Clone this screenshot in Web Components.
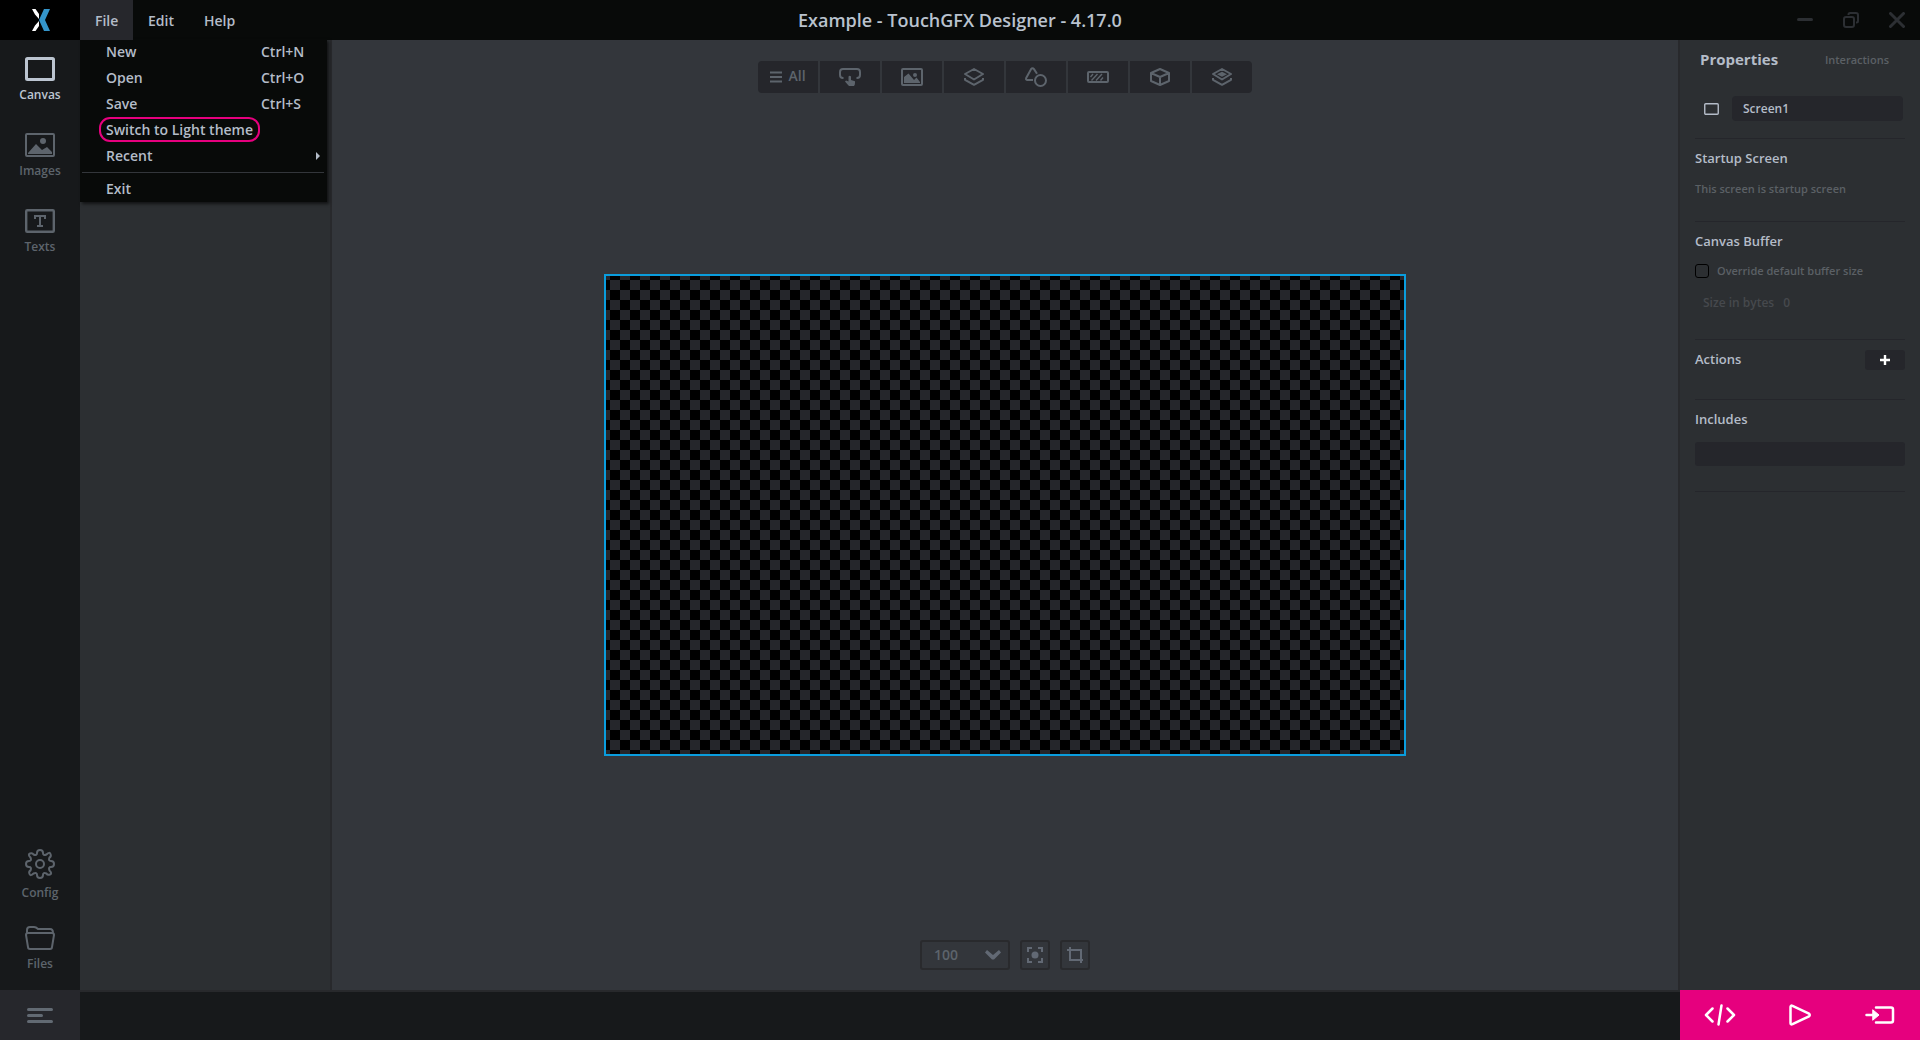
<!DOCTYPE html>
<html lang="en"><head><meta charset="utf-8"><title>Example - TouchGFX Designer - 4.17.0</title>
<style>html,body{margin:0;height:100%;overflow:hidden;background:#33363b}body{font-family:"Open Sans","Noto Sans",sans-serif}</style></head><body>
<gfx-app></gfx-app>
<script>
const base='<style>*{box-sizing:border-box}svg{display:block;flex:none}</style>';
function define(name,html){
  const t=document.createElement('template');t.innerHTML=base+html;
  customElements.define(name,class extends HTMLElement{
    constructor(){super();this.attachShadow({mode:'open'}).append(t.content.cloneNode(true));}
  });
}
define('menu-row',`<style>:host{display:flex;height:26px;align-items:center;padding:0 0 0 26px;font:600 14px/26px "Open Sans",sans-serif;color:#b4bcc8}
.l{width:155px;white-space:nowrap}.l span{display:inline-block}
:host([marked]) .l span{outline:2px solid #e6007e;border-radius:9px;line-height:21px;padding:0 5px;margin:0 -5px}
.k{white-space:nowrap}</style><div class="l"><span><slot></slot></span></div><div class="k"><slot name="key"></slot></div>`);
define('file-menu',`<style>:host{display:block;width:247px;height:163px;background:#080a09;box-shadow:2px 2px 3px #0009}
hr{border:0;height:1px;background:#33363b;margin:3px 3px 3px 2px}svg{margin-left:55px}</style>
<menu-row>New<span slot="key">Ctrl+N</span></menu-row><menu-row>Open<span slot="key">Ctrl+O</span></menu-row><menu-row>Save<span slot="key">Ctrl+S</span></menu-row>
<menu-row marked>Switch to Light theme</menu-row><menu-row>Recent<svg slot="key" width="4" height="8"><path d="M0 0 4 4 0 8z" fill="#b4bcc8"/></svg></menu-row><hr><menu-row>Exit</menu-row>`);
define('title-bar',`<style>:host{display:flex;height:40px;background:#080a09;color:#b4bcc8;font:600 14px/41px "Open Sans",sans-serif;position:relative;z-index:2}
.logo{width:80px;background:#000;padding:9px 0 0 32px}.m{height:40px}.file{width:53px;background:#26272c;position:relative;padding-left:15px}
.edit{width:56px;padding-left:15px}.help{width:63px;padding-left:15px}
.title{flex:1;padding-left:546px;font-size:18px;white-space:pre;color:#b9c2ce}
.win{display:flex;align-items:center;gap:30px;padding-right:15px}file-menu{position:absolute;left:0;top:39px;z-index:-1}</style>
<div class="logo"><svg width="18" height="22" viewBox="0 0 18 22"><path d="M0 0h3.500L7 5v5L3 5.500zM0 22h3.500L7 17v-5L3 16.500z" fill="#fff"/><path d="M12 0h6l-5 11 5 11h-6L7 11z" fill="#3495cb"/></svg></div>
<div class="m file">File<file-menu></file-menu></div><div class="m edit">Edit</div><div class="m help">Help</div><div class="title">Example - TouchGFX Designer - 4.17.0</div>
<div class="win"><svg width="16" height="16"><path d="M1.500 7.500h13" stroke="#2c2f33" stroke-width="3" stroke-linecap="round"/></svg>
<svg width="16" height="16" fill="none" stroke="#2c2f33" stroke-width="2"><rect x="1" y="5" width="10" height="10" rx="2"/><path d="M5.500 3V2.500Q5.500 1 7 1h6q2 0 2 2v6q0 1.500-1.500 1.500H13"/></svg>
<svg width="16" height="16"><path d="M1.500 1.500l13 13M14.500 1.500l-13 13" stroke="#2c2f33" stroke-width="3" stroke-linecap="round"/></svg></div>`);
define('nav-item',`<style>:host{display:flex;flex-direction:column;align-items:center;width:80px;color:#5d646c;font:600 12px/16px "Open Sans",sans-serif}
:host([active]){color:#bcc5d1}.t{margin-top:var(--gap,6px)}</style><slot name="icon"></slot><div class="t"><slot></slot></div>`);
define('side-nav',`<style>:host{display:flex;flex-direction:column;width:80px;background:#17191b;padding-top:17px}
nav-item{height:76px}.sp{flex:1}.menu{height:50px;background:#26272c;padding:18px 0 0 27px}.cfg{height:77px;--gap:6px}.files{height:64px}</style>
<nav-item active><svg slot="icon" width="30" height="24"><rect x="1.500" y="1.500" width="27" height="21" rx="1" fill="none" stroke="currentColor" stroke-width="3"/></svg>Canvas</nav-item>
<nav-item><svg slot="icon" width="30" height="24"><rect x="1" y="1" width="28" height="22" rx="1" fill="none" stroke="currentColor" stroke-width="2"/><circle cx="18" cy="8" r="3" fill="currentColor"/><path d="M3 20 11 11l6 6 5-3 5 5v2H3z" fill="currentColor"/></svg>Images</nav-item>
<nav-item><svg slot="icon" width="30" height="24" fill="none" stroke="currentColor"><rect x="1.200" y="1.200" width="27.600" height="21.600" rx="1" stroke-width="2.400"/><path d="M10 10V7h10v3M15 7v10M12 17h6" stroke-width="2"/></svg>Texts</nav-item>
<div class="sp"></div>
<nav-item class="cfg"><svg slot="icon" width="30" height="30" fill="none" stroke="currentColor" stroke-width="2"><circle cx="15" cy="15" r="4"/><path d="M12 4Q12 1 15 1t3 3q0 3 3.500 1.500Q24.500 2.500 25.500 5t-1 3.500Q23 12 26 12q3 0 3 3t-3 3q-3 0-1.500 3.500Q27.500 24.500 25 25.500t-3.500-1Q18 23 18 26q0 3-3 3t-3-3q0-3-3.500-1.500Q5.500 27.500 4.500 25t1-3.500Q7 18 4 18q-3 0-3-3t3-3q3 0 1.500-3.500Q2.500 5.500 5 4.500t3.500 1Q12 7 12 4z"/></svg>Config</nav-item>
<nav-item class="files"><svg slot="icon" width="30" height="24" fill="none" stroke="currentColor" stroke-width="2"><path d="M2 7V4q0-3 3-3h4q2 0 4 2h12q3 0 3 4M1 9q0-2 2-2h24q2 0 2 2l-2 12q0 2-2 2H5q-2 0-2-2z"/></svg>Files</nav-item>
<div class="menu"><svg width="26" height="15"><path d="M1.500 1.500h23M1.500 7.500h13M1.500 13.500h23" stroke="#626a73" stroke-width="3" stroke-linecap="round"/></svg></div>`);
define('tool-cell',`<style>:host{display:flex;align-items:center;justify-content:center;width:60px;height:32px;background:#25262b;color:#5d646c;font:600 14px/32px "Open Sans",sans-serif}</style><slot></slot>`);
define('tool-bar',`<style>:host{display:flex;gap:2px;width:494px;border-radius:4px;overflow:hidden}svg{fill:none;stroke:currentColor;stroke-width:2}.all svg{margin-right:6px}.all span{line-height:30px;height:32px}</style>
<tool-cell class="all"><svg width="12" height="12"><path d="M0 1.500h12M0 6h12M0 10.500h12"/></svg><span>All</span></tool-cell>
<tool-cell><svg width="22" height="18"><path d="M4.500 10H4q-3 0-3-3V4q0-3 3-3h14q3 0 3 3v3q0 3-3 3h-.5"/><path d="M9.500 8.500q1.250-1.500 2.500 0V12l4 1.200V15q0 2-1 3h-5q-1.500-1.500-4-4.500l1-1 2.500 1z" fill="currentColor" stroke="none"/></svg></tool-cell>
<tool-cell><svg width="22" height="18"><rect x="1" y="1" width="20" height="16" rx="1"/><circle cx="14" cy="7" r="2" fill="currentColor" stroke="none"/><path d="M3 15V9l4.500-3.500L13 12l2.500-2.500L19 14v1z" fill="currentColor" stroke="none"/></svg></tool-cell>
<tool-cell><svg width="20" height="18" stroke-linejoin="round"><path d="M1 6 10 1l9 5-9 5.500zM1 10v1.800l9 5 9-5V10"/></svg></tool-cell>
<tool-cell><svg width="22" height="20"><path d="M8 13H2.500q-2 0-1.300-2L6 2.200q1.500-2 3 0l3 4.500"/><circle cx="15.500" cy="13.500" r="5.500"/></svg></tool-cell>
<tool-cell><svg width="22" height="12"><rect x="1" y="1" width="20" height="10" rx="1"/><path d="M3.500 6l2.500-3M4.500 9.500l6-6.500M9 9.500l6-6.500M13.500 9.500l2.500-3" stroke-width="1.400"/></svg></tool-cell>
<tool-cell><svg width="20" height="18" stroke-linejoin="round"><path d="M1 5l9-4 9 4v8l-9 4-9-4zM1 5l9 4 9-4M10 9v8"/></svg></tool-cell>
<tool-cell><svg width="20" height="18" stroke-linejoin="round"><path d="M1 6 10 1l9 5-9 5.500zM1 10v1.800l9 5 9-5V10"/><path d="M5 6.200 10 3.800l5 2.400-5 2.600z" fill="currentColor" stroke="none"/></svg></tool-cell>`);
define('zoom-bar',`<style>:host{display:flex;gap:10px;color:#5d646c}div{height:30px;width:30px;border:2px solid #292a2d;border-radius:3px;display:flex;align-items:center;justify-content:center}
.n{width:90px;justify-content:space-between;padding:0 7px 0 12px;font:600 14px/28px "Open Sans",sans-serif}svg{fill:none;stroke:#626974;stroke-width:2}</style>
<div class="n"><span>100</span><svg width="16" height="10"><path d="M2 0 8 5l6-5 2 2.500L9 9.500H7L0 2.500z" fill="#626974" stroke="none"/></svg></div>
<div><svg width="16" height="16"><path d="M1 5V1h4M11 1h4v4M15 11v4h-4M5 15H1v-4"/><circle cx="8" cy="8" r="3.500" fill="#626974" stroke="none"/></svg></div>
<div><svg width="16" height="16"><path d="M0 3h14v13M3 0v13h13"/></svg></div>`);
define('design-canvas',`<style>:host{display:block;box-sizing:border-box;width:802px;height:482px;border:2px solid #0a9ddd;background:repeating-conic-gradient(#25262b 0 25%,#000 0 50%) 14px 4px/20px 20px}</style>`);
define('work-area',`<style>:host{display:flex;flex-direction:column;align-items:center;flex:1;background:#33363b}tool-bar{margin-top:21px}design-canvas{margin-top:181px}zoom-bar{margin-top:184px}</style>
<tool-bar></tool-bar><design-canvas></design-canvas><zoom-bar></zoom-bar>`);
define('prop-section',`<style>:host{display:block;box-sizing:border-box;border-bottom:1px solid #25262b;color:#b4bcc8;font:600 13px/18px "Open Sans",sans-serif;white-space:nowrap}</style><slot></slot>`);
define('prop-panel',`<style>:host{display:block;box-sizing:border-box;width:242px;border-left:2px solid #28292c;background:#2c2f32;padding:0 15px;color:#5b6065}
.tabs{display:flex;align-items:center;height:40px;justify-content:space-between;padding:0 16px 0 5px;font:600 11px/40px "Open Sans",sans-serif}.tabs b{font-size:15px;line-height:38px;height:40px;color:#b4bcc8;font-weight:700}
.name{display:flex;align-items:center;height:57px;padding:0 2px 0 9px;gap:13px}.in{width:171px;height:25px;background:#25262b;border-radius:4px;padding-left:11px;font:600 12px/25px "Open Sans",sans-serif;color:#b4bcc8}
.s{font:600 11px/16px "Open Sans",sans-serif;color:#5b6065}.ck{display:flex;align-items:center;gap:8px}.ck i{width:14px;height:14px;border:1px solid #000;border-radius:3px}
.by{display:flex;gap:9px;margin:16px 0 0 8px;color:#46494d;font-size:12px}
.act{display:flex;justify-content:space-between;padding-top:10px}.add{width:40px;height:20px;background:#25262b;border-radius:3px;display:flex;align-items:center;justify-content:center}.inc{height:24px;background:#25262b;border-radius:3px;margin-top:14px}</style>
<div class="tabs"><b>Properties</b><span>Interactions</span></div>
<prop-section style="height:59px"><div class="name"><svg width="15" height="12"><rect x=".75" y=".75" width="13.500" height="10.500" rx="1" fill="none" stroke="#b4bcc8" stroke-width="1.400"/></svg><div class="in">Screen1</div></div></prop-section>
<prop-section style="height:83px;padding-top:10px">Startup Screen<div class="s" style="margin-top:14px">This screen is startup screen</div></prop-section>
<prop-section style="height:118px;padding-top:10px">Canvas Buffer<div class="s ck" style="margin-top:13px"><i></i>Override default buffer size</div><div class="s by"><span>Size in bytes</span><span>0</span></div></prop-section>
<prop-section style="height:60px"><div class="act">Actions<div class="add"><svg width="10" height="10"><path d="M5 0v10M0 5h10" stroke="#fff" stroke-width="2.400"/></svg></div></div></prop-section>
<prop-section style="height:92px;padding-top:10px">Includes<div class="inc"></div></prop-section>`);
define('status-bar',`<style>:host{display:flex;height:50px;background:#17191b}.f{flex:1;border-top:2px solid #28292c}.a{width:240px;background:#e6007e;display:flex;align-items:center;padding:0 25px 0 24px;justify-content:space-between}svg{fill:none;stroke:#fff;stroke-width:2.500;stroke-linecap:round;stroke-linejoin:round}.play{margin:0 1px 0 -1px}</style>
<div class="f"></div><div class="a"><svg width="32" height="22"><path d="M8.500 4.500 2 11l6.500 6.500M23.500 4.500 30 11l-6.500 6.500M17.500 1.500l-3 19"/></svg>
<svg class="play" width="22" height="22"><path d="M1.500 3q0-2 2-1.200L20 9.700q1.500 1.300 0 2.600L3.500 20.200q-2 .8-2-1.200z"/></svg>
<svg width="30" height="18"><path d="M11 1.500h15q2 0 2 2v11q0 2-2 2H11M1.500 9h7"/><path d="M8 4l6 5-6 5z" fill="#fff" stroke-width="1"/></svg></div>`);
define('gfx-app',`<style>:host{display:flex;flex-direction:column;width:1920px;height:1040px}.body{flex:1;display:flex;min-height:0}.main{flex:1;display:flex;flex-direction:column}.top{flex:1;display:flex;min-height:0}.tree{width:252px;background:#2c2f32;border-right:2px solid #28292c}</style>
<title-bar></title-bar><div class="body"><side-nav></side-nav><div class="main"><div class="top"><div class="tree"></div><work-area></work-area><prop-panel></prop-panel></div><status-bar></status-bar></div></div>`);
</script></body></html>
